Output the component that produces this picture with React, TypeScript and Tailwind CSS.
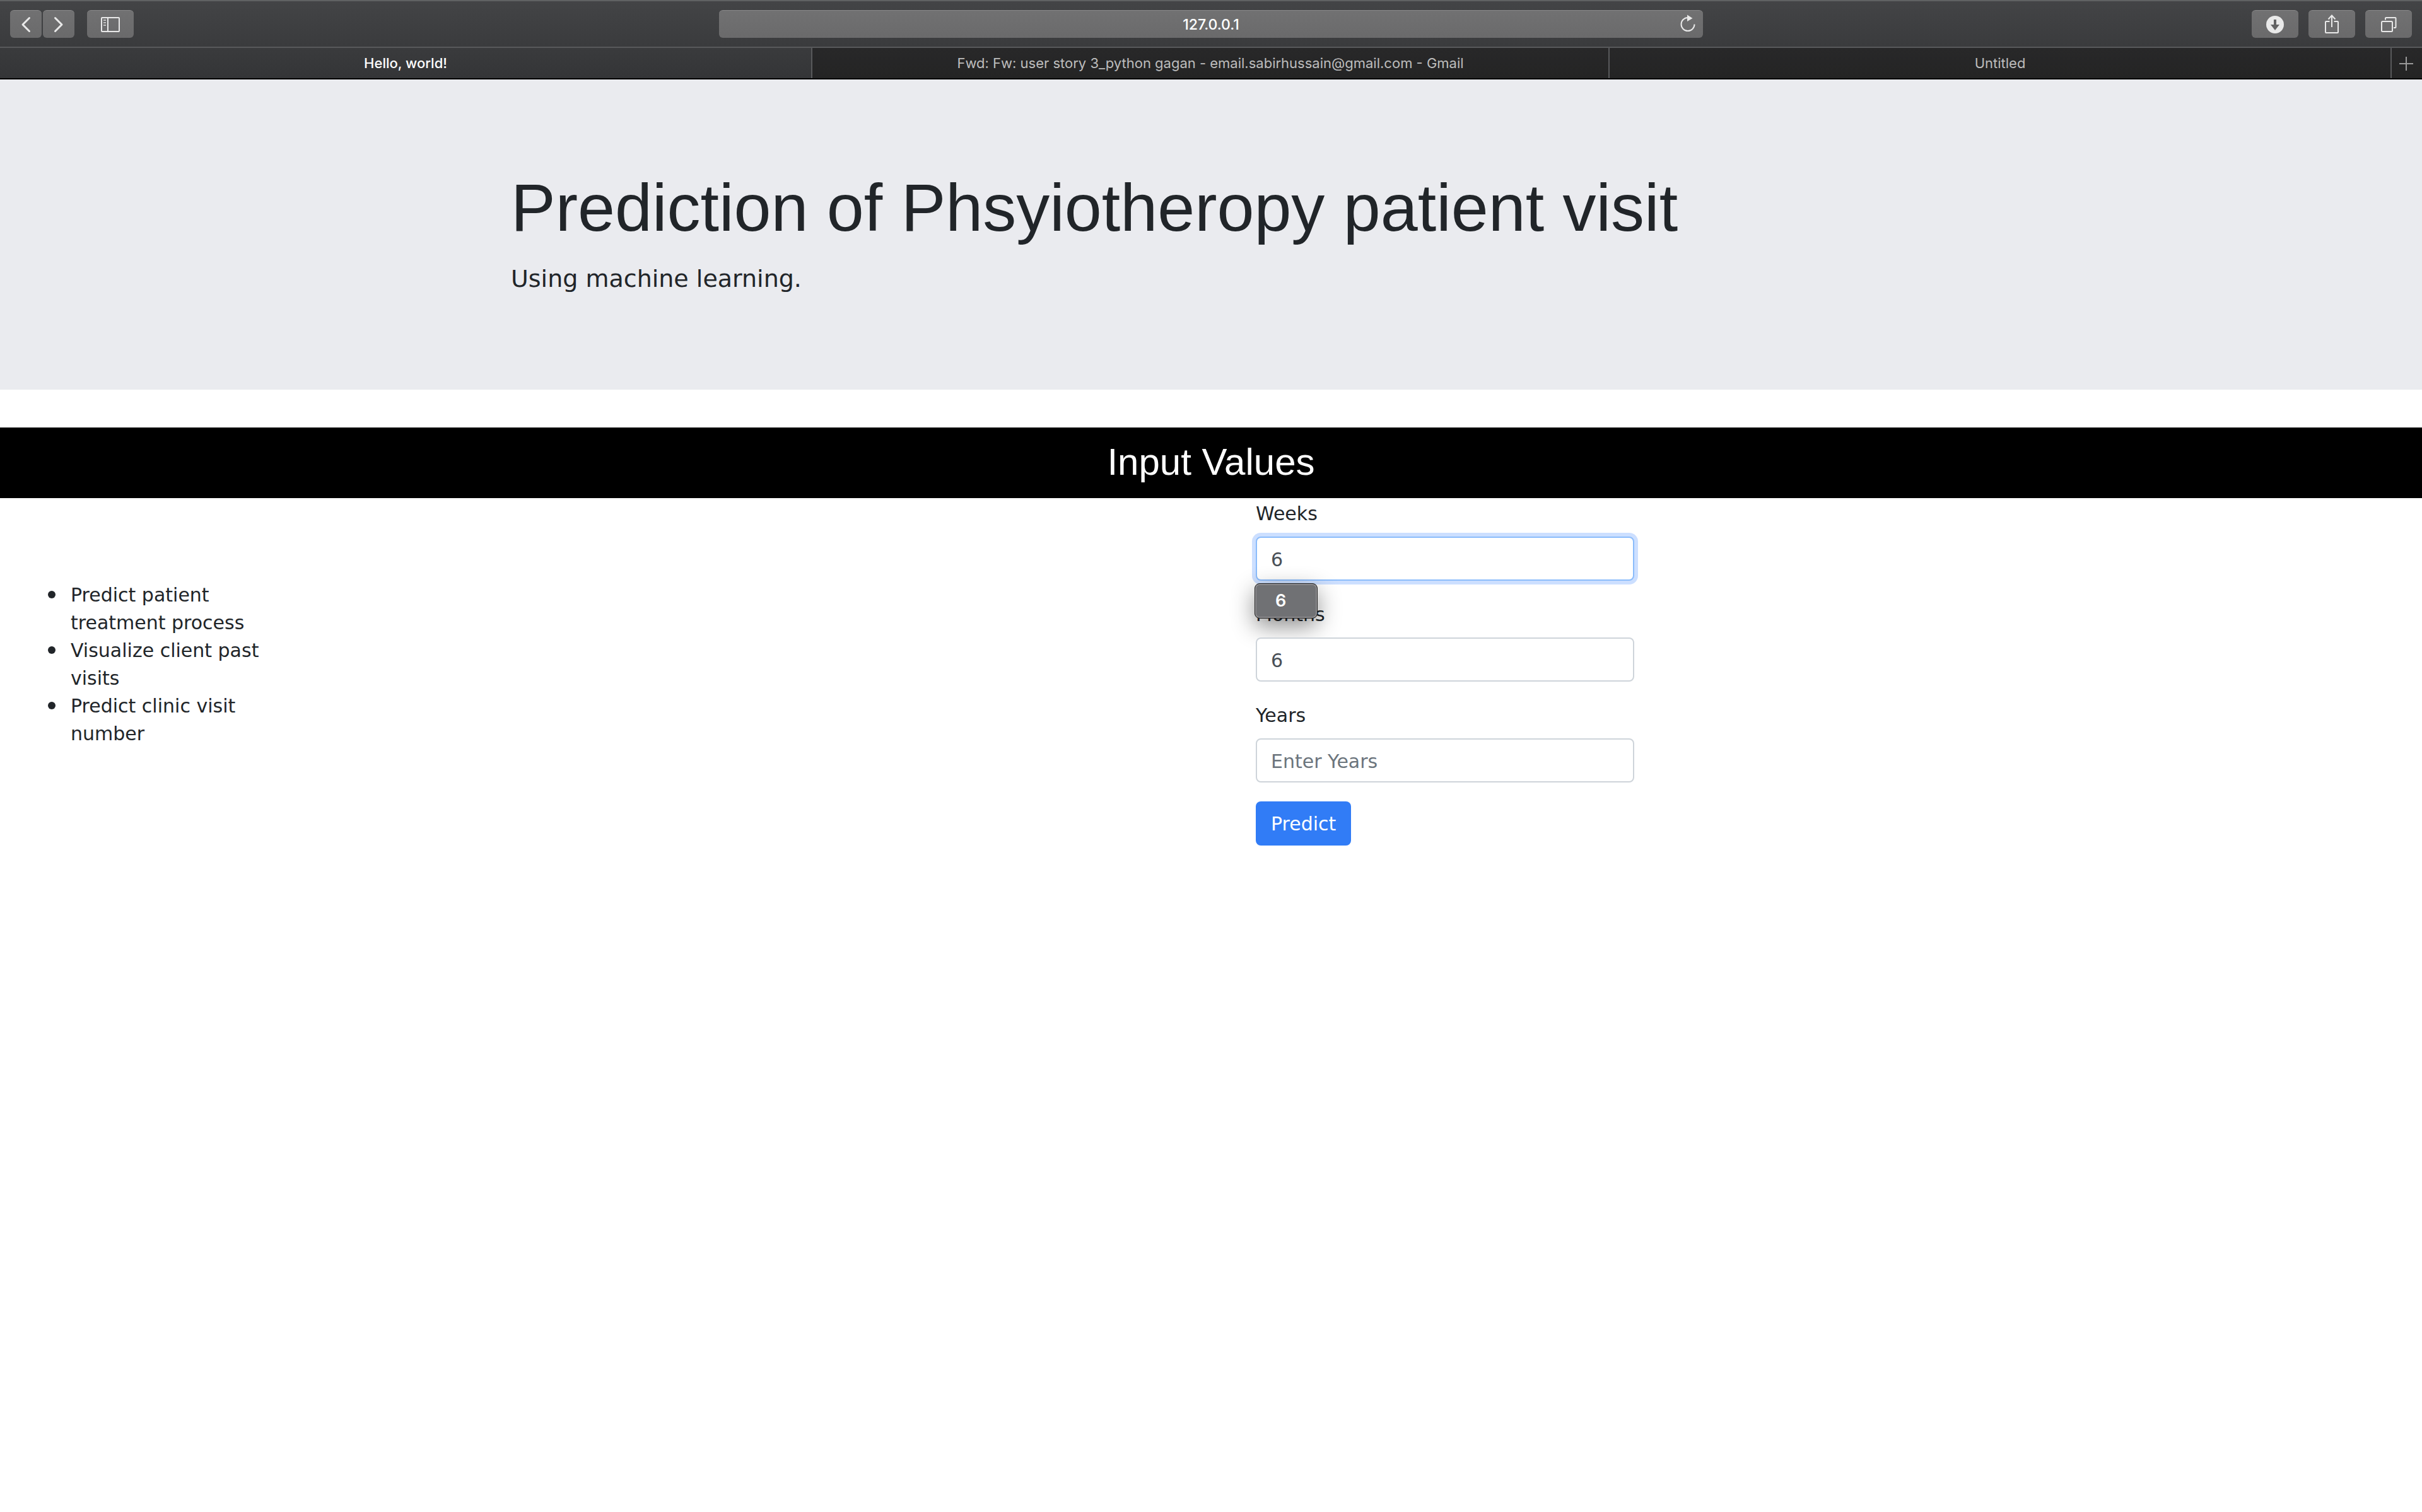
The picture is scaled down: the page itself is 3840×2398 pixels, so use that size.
import { useState, type ReactNode } from "react";

const toolButton =
  "flex h-11 items-center justify-center rounded-md border-t border-[#8a8a8b] bg-linear-to-b from-[#717172] to-[#6a6a6b] text-[#e9e9e9]";

function ToolButton({ label, wide, children }: { label: string; wide?: boolean; children: ReactNode }) {
  return (
    <button type="button" aria-label={label} className={`${toolButton} ${wide ? "w-[74px]" : "w-[50px]"}`}>
      {children}
    </button>
  );
}

function Toolbar() {
  return (
    <div className="grid h-[76px] grid-cols-[1fr_1560px_1fr] items-center border-t-2 border-b-2 border-t-[#606263] border-b-[#58595b] bg-linear-to-b from-[#434446] to-[#3a3b3d] px-4">
      <div className="flex items-center">
        <div className="flex gap-0.5">
          <ToolButton label="Back">
            <svg width="50" height="44" viewBox="0 0 50 44" fill="none" stroke="currentColor" strokeWidth="3" strokeLinecap="round" strokeLinejoin="round">
              <path d="M30.5 11.5 20 22l10.5 10.5" />
            </svg>
          </ToolButton>
          <ToolButton label="Forward">
            <svg width="50" height="44" viewBox="0 0 50 44" fill="none" stroke="currentColor" strokeWidth="3" strokeLinecap="round" strokeLinejoin="round">
              <path d="M19.5 11.5 30 22 19.5 32.5" />
            </svg>
          </ToolButton>
        </div>
        <div className="ml-5">
          <ToolButton label="Show sidebar" wide>
            <svg width="74" height="44" viewBox="0 0 74 44" fill="none" stroke="currentColor" strokeWidth="2">
              <rect x="23" y="11" width="28" height="22" rx="1" />
              <path d="M33 11v22" />
              <path d="M26 15h4M26 19h4M26 23h4" stroke="#c2c2c2" />
            </svg>
          </ToolButton>
        </div>
      </div>

      <div className="relative">
        <input
          aria-label="Address"
          defaultValue="127.0.0.1"
          className="block h-11 w-full rounded-md border-t border-[#8a8a8b] bg-linear-to-b from-[#717172] to-[#6a6a6b] px-12 text-center font-[Inter,sans-serif] text-[23px] font-medium text-white outline-none"
        />
        <button type="button" aria-label="Reload" className="absolute top-0 right-0 text-[#e9e9e9]">
          <svg width="48" height="44" viewBox="0 0 48 44" fill="none" stroke="currentColor" strokeWidth="2">
            <path d="M34.5 22.5a10.500 10.500 0 1 1-10.500-10.500" />
            <path d="M23 7.5v10.500l8.500-5z" fill="currentColor" stroke="none" />
          </svg>
        </button>
      </div>

      <div className="flex justify-end gap-4">
        <ToolButton label="Downloads" wide>
          <svg width="74" height="44" viewBox="0 0 74 44" fill="none">
            <circle cx="37" cy="22" r="14" fill="currentColor" />
            <path d="M35 14h4v8h5l-7 9-7-9h5z" fill="#636364" />
          </svg>
        </ToolButton>
        <ToolButton label="Share" wide>
          <svg width="74" height="44" viewBox="0 0 74 44" fill="none" stroke="currentColor" strokeWidth="2">
            <path d="M33.500 17H28a1 1 0 0 0-1 1v16a1 1 0 0 0 1 1h18a1 1 0 0 0 1-1V18a1 1 0 0 0-1-1h-5.500" />
            <path d="M37 26V8" />
            <path d="m31.500 13.500 5.500-6 5.500 6" />
          </svg>
        </ToolButton>
        <ToolButton label="Show all tabs" wide>
          <svg width="74" height="44" viewBox="0 0 74 44" fill="none" stroke="currentColor" strokeWidth="2">
            <rect x="26" y="17" width="17" height="16" rx="1.500" />
            <path d="M32 14.500V12a1 1 0 0 1 1-1h14.500a1 1 0 0 1 1 1v14a1 1 0 0 1-1 1H45" />
          </svg>
        </ToolButton>
      </div>
    </div>
  );
}

function TabBar() {
  return (
    <div
      role="tablist"
      className="grid h-[50px] grid-cols-[1288fr_1264fr_1240fr_48px] border-b-2 border-black bg-linear-to-b from-[#282829] to-[#242424] font-[Inter,sans-serif] text-[22px] leading-[48px] text-[#bdbdbd]"
    >
      <button type="button" role="tab" aria-selected="true" className="border-r-2 border-[#58595b] bg-linear-to-b from-[#3a3b3d] to-[#343537] font-medium text-white">
        Hello, world!
      </button>
      <button type="button" role="tab" aria-selected="false" className="border-r-2 border-[#58595b]">
        Fwd: Fw: user story 3_python gagan - email.sabirhussain@gmail.com - Gmail
      </button>
      <button type="button" role="tab" aria-selected="false" className="border-r-2 border-[#58595b]">
        Untitled
      </button>
      <button type="button" aria-label="New tab" className="flex items-center justify-center text-[#9a9a9a]">
        <svg width="24" height="24" viewBox="0 0 24 24" fill="none" stroke="currentColor" strokeWidth="2">
          <path d="M0 13h22M11 2v22" />
        </svg>
      </button>
    </div>
  );
}

const field =
  "block h-[70px] w-full rounded-lg border-2 bg-white px-[22px] pt-0.5 text-[30px] text-[#495057] outline-none placeholder:text-[#6c757d]";

function Field({
  id,
  label,
  initial,
  active,
  suggestion,
}: {
  id: string;
  label: string;
  initial: string;
  active?: boolean;
  suggestion?: string;
}) {
  const [value, setValue] = useState(initial);
  return (
    <div className="mb-[30px]">
      <label htmlFor={id} className="mb-3.5 block pt-0.5 leading-[44px]">
        {label}
      </label>
      <div className="relative">
        <input
          id={id}
          value={value}
          placeholder={`Enter ${label}`}
          onChange={(e) => setValue(e.target.value)}
          className={`${field} ${active ? "border-[#8bbcfb] ring-6 ring-[#ccdfff]" : "border-[#ced4da]"}`}
        />
        {suggestion && (
          <button
            type="button"
            onClick={() => setValue(suggestion)}
            className="absolute top-full -left-0.5 mt-1 h-14 w-[100px] rounded-lg border border-[#222] bg-[#707174] pl-8 text-left font-[Inter,sans-serif] text-[27px] font-semibold text-white shadow-[inset_0_0_0_2px_#8b8a8d,0_12px_36px_rgba(0,0,0,0.45)]"
          >
            {suggestion}
          </button>
        )}
      </div>
    </div>
  );
}

const goals = ["Predict patient treatment process", "Visualize client past visits", "Predict clinic visit number"];

export default function App() {
  return (
    <div className="min-h-screen bg-white font-['DejaVu_Sans',sans-serif] text-[30px] leading-[44px] text-[#212529]">
      <Toolbar />
      <TabBar />

      <header className="mb-[60px] bg-[#eaebef] pt-[140px] pb-[148px]">
        <div className="mx-auto max-w-[2220px]">
          <h1 className="mb-[22px] font-['Liberation_Sans',sans-serif] text-[106px] leading-[126px]">
            Prediction of Phsyiotheropy patient visit
          </h1>
          <p className="text-[38px] leading-[56px]">Using machine learning.</p>
        </div>
      </header>

      <main>
        <h2 className="bg-black pb-0.5 text-center font-['Liberation_Sans',sans-serif] text-[60px] leading-[110px] text-white">
          Input Values
        </h2>
        <div className="grid grid-cols-2">
          <ul className="mt-[132px] ml-[76px] w-[356px]">
            {goals.map((goal) => (
              <li key={goal} className="flex items-start gap-6">
                <span className="mt-[15px] size-3 shrink-0 rounded-full bg-[#212529]" />
                <span>{goal}</span>
              </li>
            ))}
          </ul>
          <form className="ml-[71px] w-[600px] pt-px" onSubmit={(e) => e.preventDefault()}>
            <Field id="weeks" label="Weeks" initial="6" active suggestion="6" />
            <Field id="months" label="Months" initial="6" />
            <Field id="years" label="Years" initial="" />
            <button type="submit" className="h-[70px] rounded-lg bg-[#317cf6] px-6 pt-0.5 text-white">
              Predict
            </button>
          </form>
        </div>
      </main>
    </div>
  );
}
